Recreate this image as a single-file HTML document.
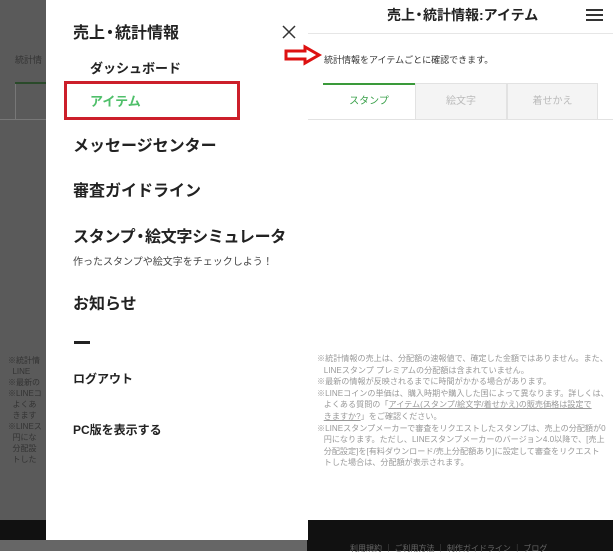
<!DOCTYPE html>
<html><head><meta charset="utf-8"><style>
*{margin:0;padding:0;box-sizing:border-box}
body{width:613px;height:551px;overflow:hidden;position:relative;background:#fff;font-family:"Liberation Sans","Noto Sans CJK JP",sans-serif}
.a{position:absolute;white-space:nowrap}
.n{margin:0 -3px}
</style></head><body>
<div class="a" style="left:0;top:0;width:46px;height:551px;background:#5a5a5a"></div>
<div class="a" style="left:15px;top:53px;font-size:9px;color:#333">統計情</div>
<div class="a" style="left:15px;top:82px;width:31px;height:2px;background:#2a4a2a"></div>
<div class="a" style="left:15px;top:84px;width:1px;height:35px;background:#777"></div>
<div class="a" style="left:0;top:119px;width:46px;height:1px;background:#777"></div>
<div class="a" style="left:8px;top:355px;font-size:8px;line-height:11px;color:#333">※統計情<br>&nbsp; LINE<br>※最新の<br>※LINEコ<br>&nbsp; よくあ<br>&nbsp; きます<br>※LINEス<br>&nbsp; 円にな<br>&nbsp; 分配設<br>&nbsp; トした</div>
<div class="a" style="left:0;top:520px;width:46px;height:20px;background:#111"></div>
<div class="a" style="left:0;top:540px;width:613px;height:11px;background:#666"></div>
<div class="a" style="left:307px;top:0;width:306px;height:520px;background:#fff"></div>
<div class="a" style="left:387px;top:5px;font-size:14px;font-weight:bold;color:#222">売上<span class="n">・</span>統計情報:アイテム</div>
<div class="a" style="left:586px;top:9px;width:17px;height:2px;background:#333;box-shadow:0 5px 0 #333,0 10px 0 #333"></div>
<div class="a" style="left:307px;top:33px;width:306px;height:1px;background:#e6e6e6"></div>
<div class="a" style="left:324px;top:53px;font-size:9px;color:#333">統計情報をアイテムごとに確認できます。</div>
<div class="a" style="left:323px;top:83px;width:92px;height:37px;border-top:2px solid #3a9a3a;text-align:center;line-height:33px;font-size:10px;color:#3aa04a">スタンプ</div>
<div class="a" style="left:415px;top:83px;width:92px;height:37px;background:#f4f4f4;border:1px solid #e2e2e2;text-align:center;line-height:35px;font-size:10px;color:#bbb">絵文字</div>
<div class="a" style="left:507px;top:83px;width:91px;height:37px;background:#f4f4f4;border:1px solid #e2e2e2;text-align:center;line-height:35px;font-size:10px;color:#bbb">着せかえ</div>
<div class="a" style="left:307px;top:119px;width:306px;height:1px;background:#e2e2e2"></div>
<div class="a" style="left:317px;top:353px;font-size:8.1px;line-height:11.6px;color:#999">※統計情報の売上は、分配額の速報値で、確定した金額ではありません。また、<br>&nbsp;&nbsp;&nbsp;LINEスタンプ プレミアムの分配額は含まれていません。<br>※最新の情報が反映されるまでに時間がかかる場合があります。<br>※LINEコインの単価は、購入時期や購入した国によって異なります。詳しくは、<br>&nbsp;&nbsp;&nbsp;よくある質問の「<u>アイテム(スタンプ/絵文字/着せかえ)の販売価格は設定で</u><br>&nbsp;&nbsp;&nbsp;<u>きますか?</u>」をご確認ください。<br>※LINEスタンプメーカーで審査をリクエストしたスタンプは、売上の分配額が0<br>&nbsp;&nbsp;&nbsp;円になります。ただし、LINEスタンプメーカーのバージョン4.0以降で、[売上<br>&nbsp;&nbsp;&nbsp;分配設定]を[有料ダウンロード/売上分配額あり]に設定して審査をリクエスト<br>&nbsp;&nbsp;&nbsp;トした場合は、分配額が表示されます。</div>
<div class="a" style="left:307px;top:520px;width:306px;height:31px;background:#111"></div>
<div class="a" style="left:350px;top:543px;font-size:8px;color:#666">利用規約 ｜ ご利用方法 ｜ 制作ガイドライン ｜ ブログ</div>
<div class="a" style="left:46px;top:0;width:262px;height:540px;background:#fff"></div>
<div class="a" style="left:73px;top:19px;font-size:16px;font-weight:bold;color:#222">売上<span class="n">・</span>統計情報</div>
<svg class="a" style="left:282px;top:25px" width="14" height="14"><path d="M1 1L13 13M13 1L1 13" stroke="#333" stroke-width="1.5"/></svg>
<div class="a" style="left:90px;top:58px;font-size:13px;font-weight:bold;color:#222">ダッシュボード</div>
<div class="a" style="left:64px;top:81px;width:176px;height:39px;border:3px solid #cc1f2a"></div>
<div class="a" style="left:90px;top:91px;font-size:13px;font-weight:bold;color:#4fbf6a">アイテム</div>
<div class="a" style="left:73px;top:132px;font-size:16px;font-weight:bold;color:#222">メッセージセンター</div>
<div class="a" style="left:73px;top:177px;font-size:16px;font-weight:bold;color:#222">審査ガイドライン</div>
<div class="a" style="left:73px;top:223px;font-size:16px;font-weight:bold;color:#222;letter-spacing:-0.3px">スタンプ<span class="n">・</span>絵文字シミュレータ</div>
<div class="a" style="left:73px;top:253px;font-size:10px;color:#444">作ったスタンプや絵文字をチェックしよう！</div>
<div class="a" style="left:73px;top:290px;font-size:16px;font-weight:bold;color:#222">お知らせ</div>
<div class="a" style="left:74px;top:341px;width:16px;height:3px;background:#222"></div>
<div class="a" style="left:73px;top:370px;font-size:12px;font-weight:bold;color:#222">ログアウト</div>
<div class="a" style="left:73px;top:421px;font-size:12px;font-weight:bold;color:#222">PC版を表示する</div>
<svg class="a" style="left:283px;top:44px" width="40" height="22"><path d="M3 7 H22 V3 L36 11 L22 19 V15 H3 Z" fill="#fff" stroke="#d11" stroke-width="3"/></svg>
</body></html>
